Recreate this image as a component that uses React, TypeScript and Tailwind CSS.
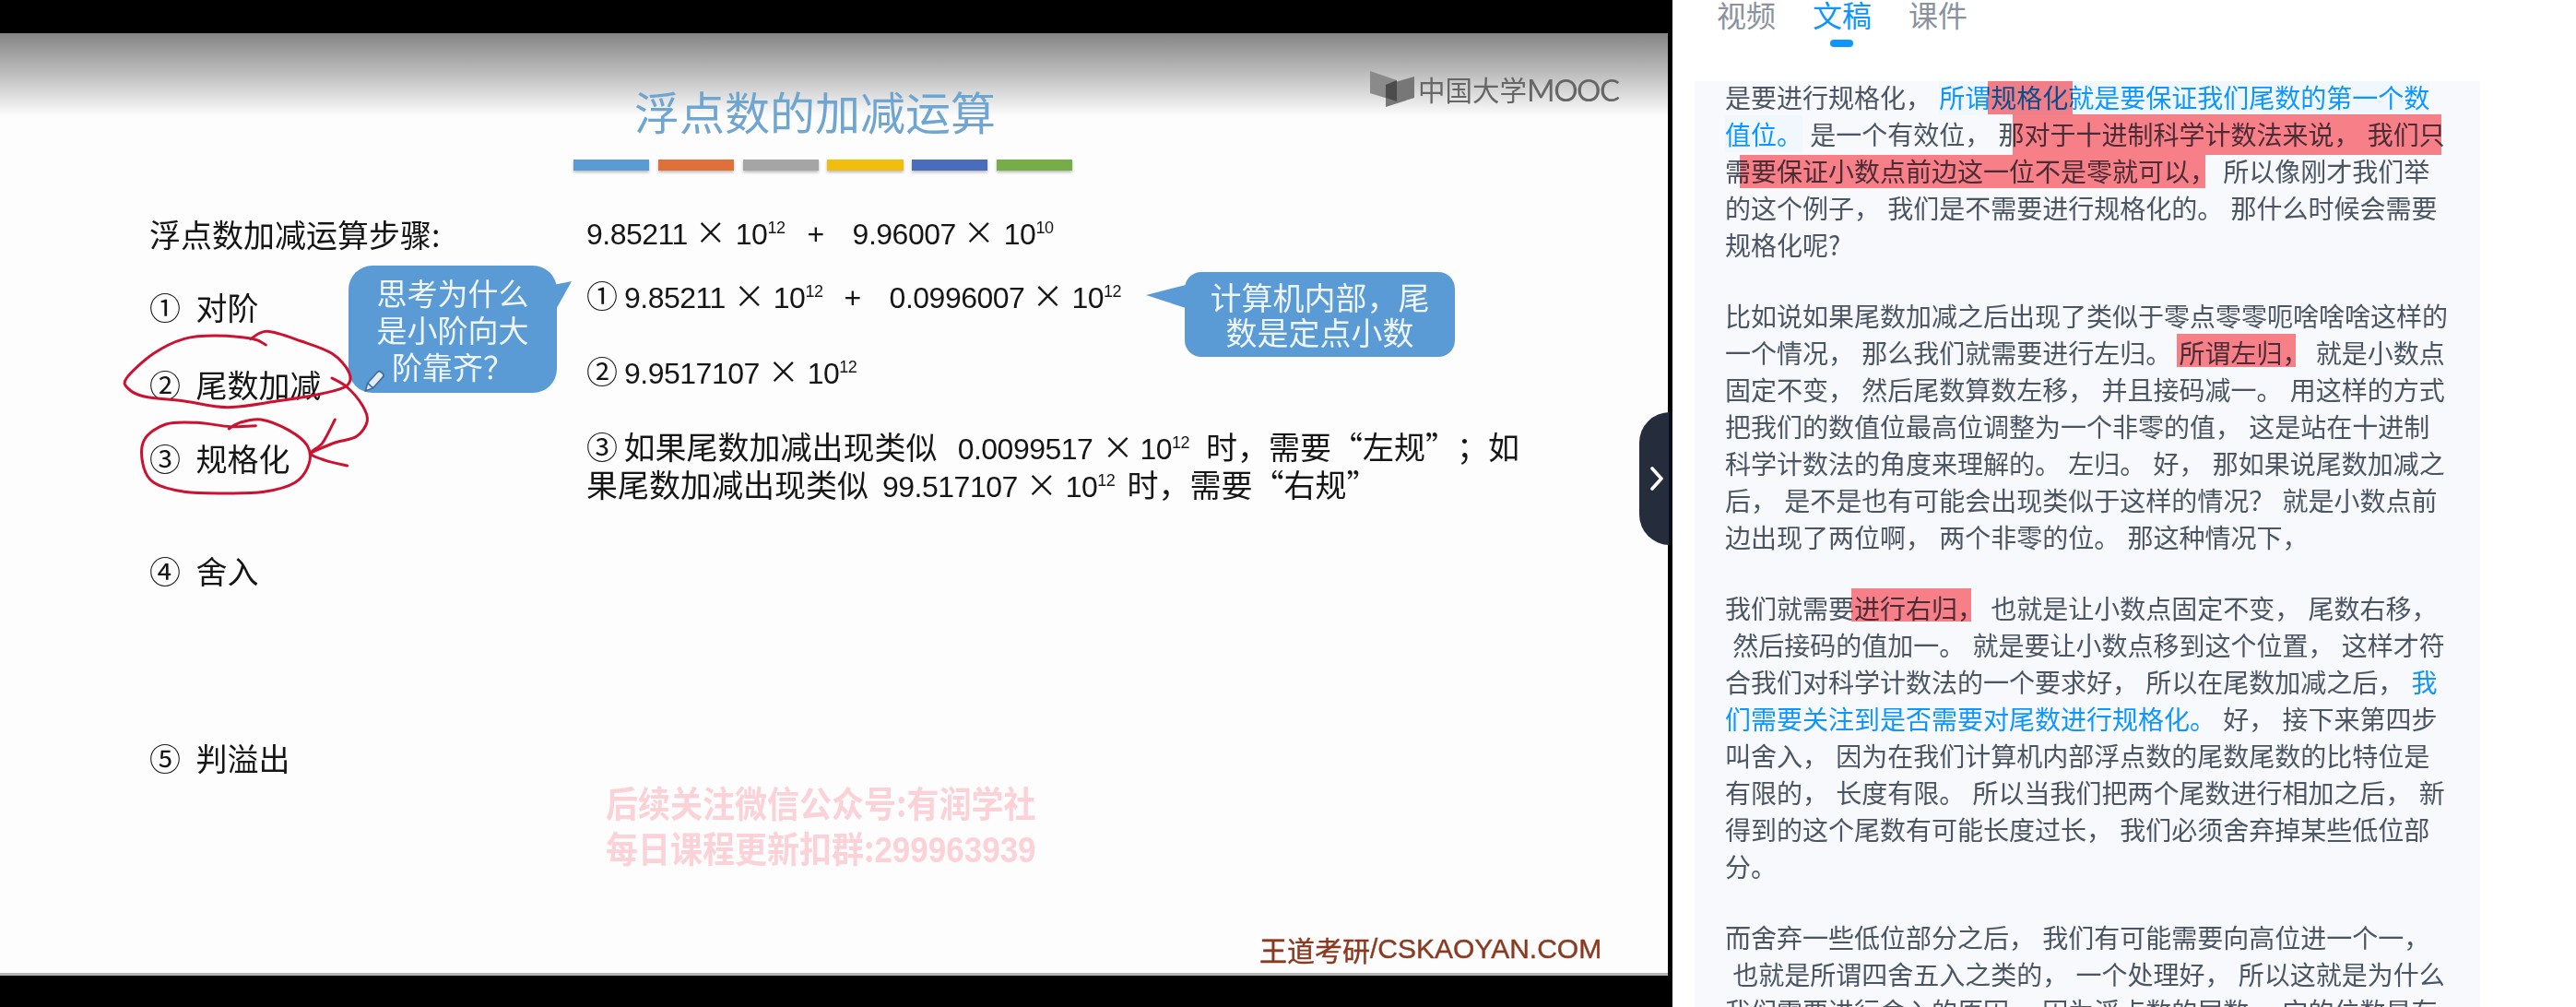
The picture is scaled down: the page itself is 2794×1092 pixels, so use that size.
import React from "react";

const CJK = "font-['Noto_Sans_CJK_SC','Noto_Sans',sans-serif]";
const NUM = "font-['Liberation_Sans','Noto_Sans_CJK_SC',sans-serif]";

function smooth(pts: number[][]) {
  let d = `M${pts[0][0]} ${pts[0][1]}`;
  for (let i = 0; i < pts.length - 1; i++) {
    const p0 = pts[Math.max(0, i - 1)];
    const p1 = pts[i];
    const p2 = pts[i + 1];
    const p3 = pts[Math.min(pts.length - 1, i + 2)];
    const c1 = [p1[0] + (p2[0] - p0[0]) / 6, p1[1] + (p2[1] - p0[1]) / 6];
    const c2 = [p2[0] - (p3[0] - p1[0]) / 6, p2[1] - (p3[1] - p1[1]) / 6];
    d += ` C${c1[0]} ${c1[1]} ${c2[0]} ${c2[1]} ${p2[0]} ${p2[1]}`;
  }
  return d;
}

const loop1 = [[565, 312], [520, 292], [400, 282], [300, 292], [200, 340], [112, 420], [118, 455], [170, 480], [300, 495], [440, 515], [600, 495], [750, 470], [828, 445], [835, 400], [780, 340], [680, 300], [570, 268], [515, 293]];
const arrow = [[780, 420], [830, 450], [880, 510], [895, 560], [860, 610], [790, 630], [712, 662]];
const head = [[790, 555], [750, 630], [712, 665], [760, 688], [830, 705]];
const loop2 = [[532, 575], [450, 578], [340, 565], [240, 570], [170, 620], [165, 700], [200, 760], [300, 790], [430, 795], [560, 790], [660, 760], [705, 700], [700, 640], [640, 590], [550, 555], [480, 565], [445, 585]];

function Times({ className }: { className: string }) {
  return <span className={`inline-block w-[34px] text-center text-[34px] leading-none tracking-normal ${CJK} ${className}`}>×</span>;
}

function Pow({ e }: { e: string }) {
  return (
    <span>
      10<sup className="text-[18px] align-baseline relative top-[-12px] leading-none">{e}</sup>
    </span>
  );
}

function Mark({ className }: { className: string }) {
  return <span className={`absolute bg-[#ff8289] mix-blend-multiply ${className}`} />;
}

function Line({ children }: { children: React.ReactNode }) {
  return <div className="h-[40px] leading-[40px] whitespace-pre [word-spacing:2px]">{children}</div>;
}

function Blue({ children }: { children: React.ReactNode }) {
  return <span className="text-[#0d96ff] bg-[#f0f8fe] inline-block h-[40px]">{children}</span>;
}

function Step({ className, children }: { className: string; children: React.ReactNode }) {
  return <div className={`h-[50px] leading-[50px] whitespace-pre [word-spacing:9px] ${className}`}>{children}</div>;
}

export default function App() {
  return (
    <div className="flex h-[1092px] w-[2794px] overflow-hidden bg-white">
      {/* video */}
      <div className="relative w-[1814px] shrink-0 bg-black">
        <div className="flex h-[36px] bg-black" />
        <div className={`relative h-[1022px] w-[1809px] bg-[#fdfdfd] text-[#151515] text-[34px] blur-[0.6px] ${CJK}`}>
          <div className="h-[90px] bg-gradient-to-b from-[#858585] to-[#fdfdfd]" />
          {/* title + bars */}
          <div className="absolute left-[622px] top-[52px] w-[541px]">
            <div className="ml-[-17px] h-[63px] text-center text-[49px] leading-[63px] text-[#6fa5d1]">浮点数的加减运算</div>
            <div className="mt-[22px] flex h-[12px] gap-[9.5px]">
              <div className="flex-1 bg-[#5b9bd5] shadow-[0_2px_3px_#bbb]" />
              <div className="flex-1 bg-[#e0703a] shadow-[0_2px_3px_#bbb]" />
              <div className="flex-1 bg-[#a5a5a5] shadow-[0_2px_3px_#bbb]" />
              <div className="flex-1 bg-[#f2bd0c] shadow-[0_2px_3px_#bbb]" />
              <div className="flex-1 bg-[#4a6cbc] shadow-[0_2px_3px_#bbb]" />
              <div className="flex-1 bg-[#75ad47] shadow-[0_2px_3px_#bbb]" />
            </div>
          </div>
          {/* logo */}
          <div className="absolute left-[1486px] top-[41px] flex h-[40px] items-center text-[#666]">
            <svg width="50" height="40" viewBox="0 0 50 40">
              <polygon points="0,0 29,10 29,33 0,24" fill="#8a8a8a" />
              <polygon points="17,15 48,6 48,29 17,39" fill="#777" />
              <polygon points="17,15 29,10 29,33 17,29" fill="#4c4c4c" />
            </svg>
            <span className="ml-[2px] text-[29.5px] leading-none">中国大学</span>
            <span className="font-['Lato',sans-serif] text-[33px] leading-none tracking-[-1.5px]">MOOC</span>
          </div>
          {/* left steps */}
          <div className="absolute left-[162px] top-[193px] w-[340px]">
            <Step className="">浮点数加减运算步骤:</Step>
            <Step className="mt-[29px]">① 对阶</Step>
            <Step className="mt-[34px]">② 尾数加减</Step>
            <Step className="mt-[30px]">③ 规格化</Step>
            <Step className="mt-[72px]">④ 舍入</Step>
            <Step className="mt-[153px]">⑤ 判溢出</Step>
          </div>
          {/* right formulas */}
          <div className={`absolute left-[636px] top-[193px] w-[1040px] text-[32px] tracking-[-0.5px] ${NUM}`}>
            <div className="h-[50px] leading-[50px] whitespace-pre">
              9.85211<Times className="ml-[8px] mr-[10px]" />
              <Pow e="12" />
              <span className="ml-[24px]">+</span>
              <span className="ml-[31px]">9.96007</span>
              <Times className="ml-[8px] mr-[10px]" />
              <Pow e="10" />
            </div>
            <div className="mt-[16px] h-[50px] leading-[50px] whitespace-pre">
              <span className={`text-[34px] inline-block w-[41px] ${CJK}`}>①</span>
              9.85211<Times className="ml-[9px] mr-[9px]" />
              <Pow e="12" />
              <span className="ml-[23px]">+</span>
              <span className="ml-[31px]">0.0996007</span>
              <Times className="ml-[8px] mr-[9px]" />
              <Pow e="12" />
            </div>
            <div className="mt-[32px] h-[50px] leading-[50px] whitespace-pre">
              <span className={`text-[34px] inline-block w-[41px] ${CJK}`}>②</span>
              9.9517107<Times className="ml-[9px] mr-[9px]" />
              <Pow e="12" />
            </div>
            <div className="mt-[36px] h-[41px] leading-[41px] whitespace-pre">
              <span className={`text-[34px] tracking-normal [word-spacing:-1px] ${CJK}`}>③ 如果尾数加减出现类似</span>
              <span className="ml-[22px]">0.0099517</span>
              <Times className="ml-[10px] mr-[7px]" />
              <Pow e="12" />
              <span className={`ml-[18px] text-[34px] tracking-normal ${CJK}`}>
                时，需要<span className="inline-block w-[34px] text-right">“</span>左规<span className="inline-block w-[34px] text-left">”</span><span className="inline-block w-[34px] text-center">；</span>如
              </span>
            </div>
            <div className="h-[41px] leading-[41px] whitespace-pre">
              <span className={`text-[34px] tracking-normal ${CJK}`}>果尾数加减出现类似</span>
              <span className="ml-[15px]">99.517107</span>
              <Times className="ml-[9px] mr-[9px]" />
              <Pow e="12" />
              <span className={`ml-[13px] text-[34px] tracking-normal ${CJK}`}>
                时，需要<span className="inline-block w-[34px] text-right">“</span>右规<span className="inline-block w-[34px] text-left">”</span>
              </span>
            </div>
          </div>
          {/* callout 1 */}
          <div className="absolute left-[378px] top-[252px] flex h-[138px] w-[226px] flex-col items-center justify-center rounded-[26px] bg-[#5b9bd5] text-[33px] leading-[40px] text-[#eef5fb]">
            <div>思考为什么</div>
            <div>是小阶向大</div>
            <div>阶靠齐？</div>
            <svg className="absolute left-[222px] top-[17px]" width="22" height="38" viewBox="0 0 22 38">
              <polygon points="0,4 20,0 0,36" fill="#5b9bd5" />
            </svg>
          </div>
          {/* callout 2 */}
          <div className="absolute left-[1285px] top-[259px] flex h-[92px] w-[293px] flex-col items-center justify-center rounded-[18px] bg-[#5b9bd5] text-[34px] leading-[38px] text-[#eef5fb]">
            <div>计算机内部，尾</div>
            <div>数是定点小数</div>
            <svg className="absolute left-[-42px] top-[14px]" width="43" height="26" viewBox="0 0 43 26">
              <polygon points="43,0 0,11 43,25" fill="#5b9bd5" />
            </svg>
          </div>
          {/* watermark */}
          <div className="absolute left-[657px] top-[808px] w-[480px] origin-top scale-y-[1.1] text-[35px] font-bold leading-[45px] text-[#fbd2d8] whitespace-nowrap">
            <div>后续关注微信公众号:有润学社</div>
            <div>每日课程更新扣群:<span className="font-['Liberation_Sans',sans-serif]">299963939</span></div>
          </div>
          {/* footer brand */}
          <div className="absolute left-[1366px] top-[973px] flex items-center whitespace-nowrap text-[30px] leading-[40px] text-[#8b3a1f] [-webkit-text-stroke:0.4px_#8b3a1f]">
            <span>王道考研</span>
            <span className="font-['Liberation_Sans',sans-serif]">/CSKAOYAN.COM</span>
          </div>
          <div className="absolute bottom-0 left-0 h-[3px] w-full bg-[#b5b5b5]" />
          {/* handwriting */}
          <svg className="absolute left-[100px] top-[234px]" width="520" height="280" viewBox="0 0 1560 840" fill="none" stroke="#cc1230" strokeWidth="9" strokeLinecap="round" strokeLinejoin="round">
            <path d={smooth(loop1)} />
            <path d={smooth(arrow)} />
            <path d={smooth(head)} />
            <path d={smooth(loop2)} />
            <g transform="translate(917 431) rotate(42)" stroke="#3f6d9b" strokeWidth="5">
              <rect x="-12" y="-38" width="24" height="58" rx="8" fill="#e4edf5" />
              <polygon points="-12,18 12,18 0,42" fill="#e4edf5" />
            </g>
          </svg>
        </div>
        {/* collapse handle */}
        <div className="absolute left-[1778px] top-[447px] flex h-[144px] w-[36px] items-center rounded-l-[33px] bg-[#252c3c] pl-[12px]">
          <svg width="14" height="26" viewBox="0 0 14 26" fill="none" stroke="#fff" strokeWidth="3.6" strokeLinecap="round" strokeLinejoin="round">
            <path d="M2 2 L12 13 L2 24" />
          </svg>
          <span className="absolute right-0 top-0 h-full w-[4px] bg-[#0a0e1a]" />
        </div>
      </div>
      {/* transcript side */}
      <div className={`flex min-w-0 flex-1 flex-col ${CJK}`}>
        <div className="relative flex h-[88px] gap-[40px] pl-[48px] text-[32px] leading-[30px] text-[#8a929e]">
          <span>视频</span>
          <span className="relative text-[#0d96ff]">
            文稿
            <span className="absolute left-[19px] top-[43px] h-[8px] w-[25px] rounded-full bg-[#0d96ff]" />
          </span>
          <span>课件</span>
        </div>
        <div className="ml-[24px] h-[1004px] w-[852px] overflow-hidden bg-[#f7f9fd] pl-[33px] text-[28px] text-[#4b5563] blur-[0.3px]">
          <div className="mb-[37px] mt-[-3px]">
            <Line>
              是要进行规格化， <Blue>所谓<span className="relative">规格化<Mark className="left-[-3px] right-[-5px] top-[3px] h-[36px]" /></span>就是要保证我们尾数的第一个数</Blue>
            </Line>
            <Line>
              <Blue>值位。</Blue> 是一个有效位， 那<span className="relative">对于十进制科学计数法来说， 我们只<Mark className="left-[-13px] right-[4px] top-[-1px] h-[44px]" /></span>
            </Line>
            <Line>
              需<span className="relative">要保证小数点前边这一位不是零就可以，<Mark className="left-[-12px] right-[11px] top-[3px] h-[36px]" /></span> 所以像刚才我们举
            </Line>
            <Line>的这个例子， 我们是不需要进行规格化的。 那什么时候会需要</Line>
            <Line>规格化呢?</Line>
          </div>
          <div className="mb-[37px]">
            <Line>比如说如果尾数加减之后出现了类似于零点零零呃啥啥啥这样的</Line>
            <Line>
              一个情况， 那么我们就需要进行左归。 <span className="relative">所谓左归，<Mark className="left-[-3px] right-[14px] top-[0px] h-[36px]" /></span> 就是小数点
            </Line>
            <Line>固定不变， 然后尾数算数左移， 并且接码减一。 用这样的方式</Line>
            <Line>把我们的数值位最高位调整为一个非零的值， 这是站在十进制</Line>
            <Line>科学计数法的角度来理解的。 左归。 好， 那如果说尾数加减之</Line>
            <Line>后， 是不是也有可能会出现类似于这样的情况？ 就是小数点前</Line>
            <Line>边出现了两位啊， 两个非零的位。 那这种情况下，</Line>
          </div>
          <div className="mb-[37px]">
            <Line>
              我们就需要<span className="relative">进行右归，<Mark className="left-[-3px] right-[13px] top-[-1px] h-[36px]" /></span> 也就是让小数点固定不变， 尾数右移，
            </Line>
            <Line> 然后接码的值加一。 就是要让小数点移到这个位置， 这样才符</Line>
            <Line>
              合我们对科学计数法的一个要求好， 所以在尾数加减之后， <span className="text-[#0d96ff]">我</span>
            </Line>
            <Line>
              <span className="text-[#0d96ff]">们需要关注到是否需要对尾数进行规格化。</span> 好， 接下来第四步
            </Line>
            <Line>叫舍入， 因为在我们计算机内部浮点数的尾数尾数的比特位是</Line>
            <Line>有限的， 长度有限。 所以当我们把两个尾数进行相加之后， 新</Line>
            <Line>得到的这个尾数有可能长度过长， 我们必须舍弃掉某些低位部</Line>
            <Line>分。</Line>
          </div>
          <div>
            <Line>而舍弃一些低位部分之后， 我们有可能需要向高位进一个一，</Line>
            <Line> 也就是所谓四舍五入之类的， 一个处理好， 所以这就是为什么</Line>
            <Line>我们需要进行舍入的原因。 因为浮点数的尾数， 它的位数是有</Line>
          </div>
        </div>
      </div>
    </div>
  );
}
